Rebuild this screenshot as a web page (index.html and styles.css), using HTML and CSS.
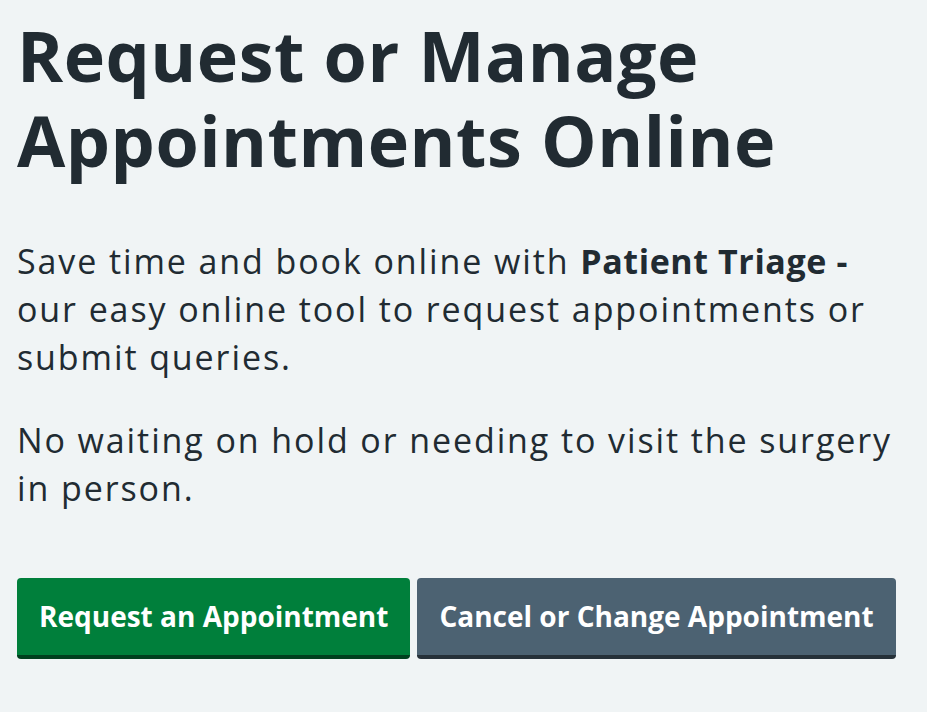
FILE: index.html
```
<!DOCTYPE html>
<html lang="en">
<head>
    <meta charset="UTF-8">
    <title>Request or Manage Appointments Online</title>
    <link rel="stylesheet" href="styles.css">
</head>
<body>
<main class="panel">
    <h1 class="panel-title">Request or Manage Appointments Online</h1>
    <p class="panel-text">Save time and book online with <strong>Patient Triage -</strong> our easy online tool to request appointments or submit queries.</p>
    <p class="panel-text">No waiting on hold or needing to visit the surgery in person.</p>
    <div class="actions">
        <a href="#" class="btn btn-green">Request an Appointment</a>
        <a href="#" class="btn btn-grey">Cancel or Change Appointment</a>
    </div>
</main>
</body>
</html>
```

FILE: styles.css
```
body{
    margin: 0;
    background: #f0f4f5;
    color: #212b32;
    font-family: "Open Sans", "Noto Sans", sans-serif;
}
.panel{
    padding: 13px 17px 0 17px;
}
.panel-title{
    margin: 0;
    font-size: 70px;
    line-height: 85px;
    font-weight: 700;
    letter-spacing: 0.5px;
}
.panel-text{
    margin: 54px 0 0 0;
    max-width: 885px;
    font-size: 34px;
    line-height: 48px;
    letter-spacing: 1.9px;
}
.panel-text + .panel-text{
    margin-top: 35px;
}
.panel-text strong{
    font-weight: 700;
    letter-spacing: 0.6px;
}
.actions{
    display: flex;
    align-items: flex-start;
    gap: 7px;
    margin-top: 66px;
}
.btn{
    display: block;
    padding: 21px 22px;
    font-size: 28px;
    line-height: 35px;
    font-weight: 700;
    color: #fff;
    text-decoration: none;
    border-radius: 4px;
    border-bottom: 4px solid;
}
.btn-green{
    background: #007f3b;
    border-bottom-color: #00401e;
}
.btn-grey{
    background: #4c6272;
    border-bottom-color: #263139;
}
```
